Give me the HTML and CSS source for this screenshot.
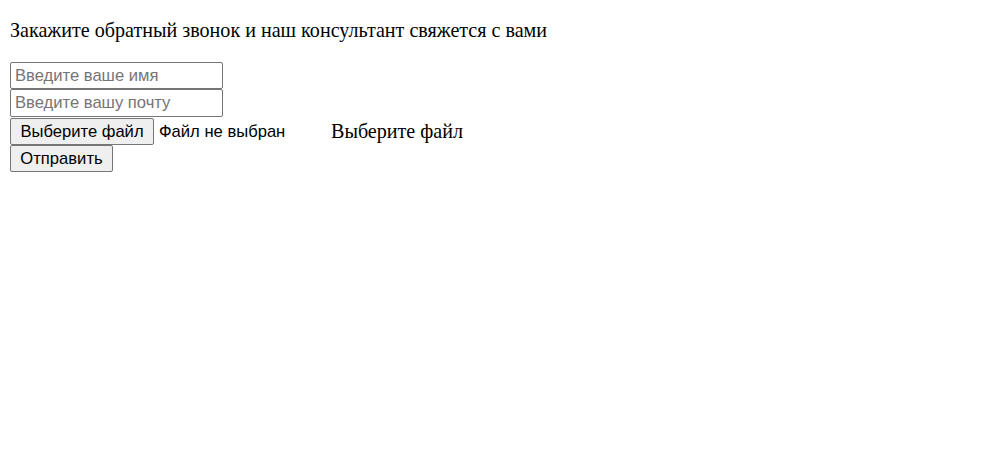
FILE: index.html
```html
<!DOCTYPE html>
<html lang="ru">
<head>
<meta charset="utf-8">
<title>Обратный звонок</title>
<link rel="stylesheet" href="styles.css">
</head>
<body>
<p class="intro">Закажите обратный звонок и наш консультант свяжется с вами</p>
<form class="form">
  <input class="field field-first" type="text" placeholder="Введите ваше имя">
  <input class="field" type="text" placeholder="Введите вашу почту">
  <div class="file-row">
    <button type="button" class="btn btn-file">Выберите файл</button>
    <span class="file-status">Файл не выбран</span>
    <span class="file-label">Выберите файл</span>
  </div>
  <button type="button" class="btn btn-submit">Отправить</button>
</form>
</body>
</html>
```

FILE: styles.css
```css
html, body {
  background: #fff;
}
body {
  margin: 0;
  padding: 19px 10px 0;
  font-family: "Liberation Serif", "Times New Roman", serif;
  font-size: 20.1px;
  color: #000;
}
.intro {
  margin: 0;
  line-height: 23px;
  height: 22px;
}
.form {
  margin-top: 21px;
  display: flex;
  flex-direction: column;
  align-items: flex-start;
}
.field {
  box-sizing: border-box;
  width: 213px;
  height: 28px;
  margin: 0;
  padding: 0 4px;
  border: 1px solid #767676;
  border-radius: 2px;
  font-family: "Liberation Sans", Arial, sans-serif;
  font-size: 16.6px;
  color: #000;
  background: #fff;
  outline: none;
}
.field-first {
  height: 27px;
}
.field::placeholder {
  color: #757575;
}
.file-row {
  display: flex;
  align-items: center;
  height: 28px;
}
.btn {
  box-sizing: border-box;
  height: 27px;
  margin: 0;
  padding: 0 8px;
  border: 1px solid #767676;
  border-radius: 2px;
  background: #efefef;
  font-family: "Liberation Sans", Arial, sans-serif;
  font-size: 16.6px;
  color: #000;
  line-height: 25px;
}
.btn-file {
  width: 144px;
}
.btn-submit {
  width: 103px;
}
.file-status {
  margin-left: 5px;
  width: 172px;
  font-family: "Liberation Sans", Arial, sans-serif;
  font-size: 16.6px;
  line-height: 27px;
}
.file-label {
  line-height: 27px;
  margin-top: 1px;
}
```
